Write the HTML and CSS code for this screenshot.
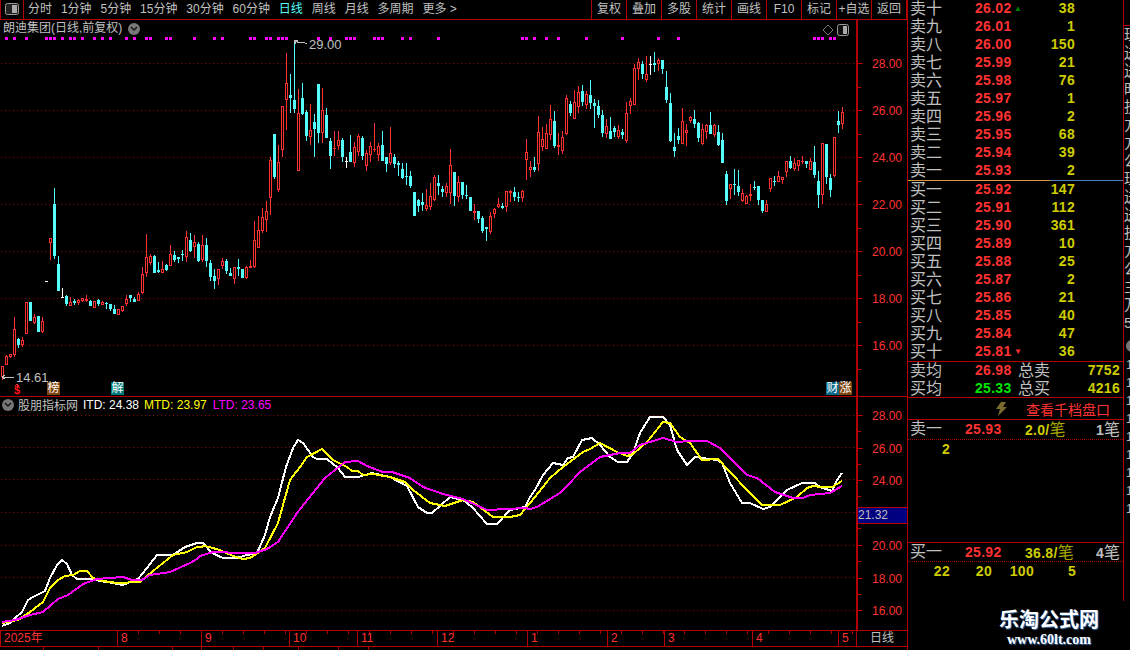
FILE: index.html
```html
<!DOCTYPE html>
<html lang="zh-CN">
<head>
    <meta charset="UTF-8">
    <title>朗迪集团 日线</title>
    <link rel="stylesheet" href="styles.css">
</head>
<body>
    <div class="app">
        <div class="main">
            <nav class="toolbar">
                <div class="tool-icon">
                    <svg width="14" height="12" viewBox="0 0 14 12"><rect x="0.5" y="0.5" width="13" height="11" rx="2" fill="#222" stroke="#999"/><rect x="7" y="2" width="5" height="8" fill="#aaa"/></svg>
                </div>
                <div class="periods">
                    <span>分时</span><span>1分钟</span><span>5分钟</span><span>15分钟</span><span>30分钟</span><span>60分钟</span>
                    <span class="current">日线</span><span>周线</span><span>月线</span><span>多周期</span><span>更多 &gt;</span>
                </div>
                <div class="tools">
                    <span>复权</span><span>叠加</span><span>多股</span><span>统计</span><span>画线</span><span>F10</span><span>标记</span><span>+自选</span><span>返回</span>
                </div>
            </nav>

            <section class="pane kline-pane">
                <div class="plot">
                    <svg id="klineChart" viewBox="0 20 856 376" width="856" height="376"></svg>
                    <div class="chart-title">
                        <span>朗迪集团(日线,前复权)</span>
                        <span class="drop-btn"><svg width="8" height="6" viewBox="0 0 8 6"><path d="M1 1l3 3 3-3" fill="none" stroke="#111" stroke-width="1.4"/></svg></span>
                    </div>
                    <div class="chart-tools">
                        <svg width="12" height="12" viewBox="0 0 12 12"><path d="M6 1l5 5-5 5-5-5z" fill="none" stroke="#777"/></svg>
                        <svg width="12" height="12" viewBox="0 0 12 12"><rect x="0.5" y="0.5" width="11" height="11" rx="2" fill="#111" stroke="#999"/><rect x="6" y="2" width="4" height="8" fill="#aaa"/></svg>
                    </div>
                    <span class="price-note note-high">29.00</span>
                    <span class="price-note note-low">14.61</span>
                    <span class="event-mark dollar">$</span>
                    <span class="event-mark badge badge-bang">榜</span>
                    <span class="event-mark badge badge-jie">解</span>
                    <span class="event-mark badge badge-cai">财</span>
                    <span class="event-mark badge badge-zhang">涨</span>
                </div>
                <div class="axis" id="klineAxis"></div>
            </section>

            <section class="pane indicator-pane">
                <div class="plot">
                    <svg id="indicatorChart" viewBox="0 397 856 233" width="856" height="233"></svg>
                    <div class="legend">
                        <span class="drop-btn"><svg width="8" height="6" viewBox="0 0 8 6"><path d="M1 1l3 3 3-3" fill="none" stroke="#111" stroke-width="1.4"/></svg></span>
                        <span class="legend-name">股朋指标网</span>
                        <span class="itd">ITD: 24.38</span>
                        <span class="mtd">MTD: 23.97</span>
                        <span class="ltd">LTD: 23.65</span>
                    </div>
                </div>
                <div class="axis" id="indicatorAxis">
                    <span class="cursor-price">21.32</span>
                </div>
            </section>

            <div class="time-row">
                <div class="time-axis" id="timeAxis"></div>
                <div class="time-unit">日线</div>
            </div>
            <div class="foot-row">
                <i></i><i></i><i></i><i></i><i></i><i></i><i></i><i></i><i></i>
            </div>
        </div>

        <aside class="quote">
            <div class="book">
                <div class="row"><span class="lbl">卖十</span><b class="up">26.02</b><em class="flag flag-up">▲</em><b class="vol">38</b></div>
                <div class="row"><span class="lbl">卖九</span><b class="up">26.01</b><em></em><b class="vol">1</b></div>
                <div class="row"><span class="lbl">卖八</span><b class="up">26.00</b><em></em><b class="vol">150</b></div>
                <div class="row"><span class="lbl">卖七</span><b class="up">25.99</b><em></em><b class="vol">21</b></div>
                <div class="row"><span class="lbl">卖六</span><b class="up">25.98</b><em></em><b class="vol">76</b></div>
                <div class="row"><span class="lbl">卖五</span><b class="up">25.97</b><em></em><b class="vol">1</b></div>
                <div class="row"><span class="lbl">卖四</span><b class="up">25.96</b><em></em><b class="vol">2</b></div>
                <div class="row"><span class="lbl">卖三</span><b class="up">25.95</b><em></em><b class="vol">68</b></div>
                <div class="row"><span class="lbl">卖二</span><b class="up">25.94</b><em></em><b class="vol">39</b></div>
                <div class="row"><span class="lbl">卖一</span><b class="up">25.93</b><em></em><b class="vol">2</b></div>
            </div>
            <div class="book-split"></div>
            <div class="book">
                <div class="row"><span class="lbl">买一</span><b class="up">25.92</b><em></em><b class="vol">147</b></div>
                <div class="row"><span class="lbl">买二</span><b class="up">25.91</b><em></em><b class="vol">112</b></div>
                <div class="row"><span class="lbl">买三</span><b class="up">25.90</b><em></em><b class="vol">361</b></div>
                <div class="row"><span class="lbl">买四</span><b class="up">25.89</b><em></em><b class="vol">10</b></div>
                <div class="row"><span class="lbl">买五</span><b class="up">25.88</b><em></em><b class="vol">25</b></div>
                <div class="row"><span class="lbl">买六</span><b class="up">25.87</b><em></em><b class="vol">2</b></div>
                <div class="row"><span class="lbl">买七</span><b class="up">25.86</b><em></em><b class="vol">21</b></div>
                <div class="row"><span class="lbl">买八</span><b class="up">25.85</b><em></em><b class="vol">40</b></div>
                <div class="row"><span class="lbl">买九</span><b class="up">25.84</b><em></em><b class="vol">47</b></div>
                <div class="row"><span class="lbl">买十</span><b class="up">25.81</b><em class="flag flag-down">▼</em><b class="vol">36</b></div>
            </div>

            <div class="totals">
                <div class="total-row"><span class="lbl">卖均</span><b class="up">26.98</b><span class="lbl">总卖</span><b class="vol">7752</b></div>
                <div class="total-row"><span class="lbl">买均</span><b class="down">25.33</b><span class="lbl">总买</span><b class="vol">4216</b></div>
            </div>

            <div class="depth-link">
                <svg width="12" height="14" viewBox="0 0 12 14"><path d="M6 0h5L8 5h4L3 14l2-7H1z" fill="#7a6a2e"/></svg>
                <span>查看千档盘口</span>
            </div>

            <div class="ticks">
                <div class="tick-head"><span class="lbl">卖一</span><b class="up">25.93</b><b class="avg">2.0/<span>笔</span></b><span class="count"><b>1</b>笔</span></div>
                <div class="tick-vols"><b>2</b></div>
            </div>
            <div class="ticks ticks-buy">
                <div class="tick-head"><span class="lbl">买一</span><b class="up">25.92</b><b class="avg">36.8/<span>笔</span></b><span class="count"><b>4</b>笔</span></div>
                <div class="tick-vols"><b>22</b><b>20</b><b>100</b><b>5</b></div>
            </div>

            <div class="watermark">
                <strong>乐淘公式网</strong>
                <strong class="site">www.60lt.com</strong>
            </div>
        </aside>

        <div class="news-edge">
            <div class="edge-rule"></div>
            <div class="edge-text">理<br>送<br>送<br>时<br>投<br>方<br>方<br>公<br>理<br>送<br>送<br>投<br>方<br>公<br>主<br>万<br>5</div>
            <div class="edge-drop"></div>
            <div class="edge-nums">1<br>1<br>1<br>1<br>1<br>1<br>1<br>1<br>1</div>
        </div>
    </div>

    <script src="chart.js"></script>
</body>
</html>
```

FILE: styles.css
```css
* {
    box-sizing: border-box;
}
html, body {
    margin: 0;
    padding: 0;
    background-color: #000;
}
body {
    font-family: "Liberation Sans", "Noto Sans CJK SC", sans-serif;
    font-size: 12px;
    color: #c0c0c0;
    overflow: hidden;
}
.app {
    display: grid;
    grid-template-columns: 907px 217px 6px;
    width: 1130px;
    height: 650px;
    overflow: hidden;
}

/* toolbar */
.toolbar {
    display: flex;
    height: 20px;
    border-bottom: 1px solid #b40000;
    line-height: 19px;
}
.tool-icon {
    width: 24px;
    border-left: 1px solid #b40000;
    border-right: 1px solid #b40000;
    padding: 3px 0 0 4px;
}
.tool-icon svg {
    display: block;
}
.periods {
    display: flex;
    gap: 8.9px;
    padding-left: 4px;
    flex: 1;
}
.periods .current {
    color: #54fcfc;
}
.tools {
    display: flex;
    border-right: 1px solid #b40000;
}
.tools span {
    width: 35px;
    text-align: center;
    border-left: 1px solid #b40000;
}

/* chart panes */
.pane {
    display: grid;
    grid-template-columns: 856px 51px;
    border-bottom: 1px solid #b40000;
}
.kline-pane {
    height: 377px;
}
.indicator-pane {
    height: 234px;
}
.plot {
    position: relative;
    overflow: hidden;
}
.plot svg {
    display: block;
}
.axis {
    position: relative;
    border-left: 2px solid #b40000;
}
.axis-label {
    position: absolute;
    right: 5px;
    color: #ff3232;
    line-height: 14px;
}
.axis-tick {
    position: absolute;
    left: 0;
    height: 1px;
    background-color: #b40000;
}
.chart-title {
    position: absolute;
    left: 3px;
    top: 0;
    display: flex;
    align-items: center;
    gap: 6px;
    font-size: 12px;
    line-height: 17px;
}
.drop-btn {
    display: inline-flex;
    align-items: center;
    justify-content: center;
    width: 12px;
    height: 12px;
    border-radius: 50%;
    background-color: #777;
}
.chart-tools {
    position: absolute;
    left: 822px;
    top: 4px;
    display: flex;
    gap: 3px;
}
.price-note {
    position: absolute;
    font-size: 13px;
    line-height: 12px;
}
.note-high {
    left: 309px;
    top: 19px;
}
.note-low {
    left: 16px;
    top: 352px;
}
.event-mark {
    position: absolute;
    top: 362px;
    height: 13px;
    line-height: 13px;
    font-size: 12px;
}
.dollar {
    left: 14px;
    top: 365px;
    height: 11px;
    line-height: 11px;
    font-size: 11px;
    color: #ff1010;
    font-weight: bold;
}
.badge {
    width: 13px;
    text-align: center;
    color: #fff;
}
.badge-bang, .badge-zhang {
    background-color: #80460f;
}
.badge-jie {
    background-color: #007a78;
}
.badge-cai {
    background-color: #0a6a8a;
}
.badge-bang {
    left: 47px;
}
.badge-jie {
    left: 111px;
}
.badge-cai {
    left: 826px;
}
.badge-zhang {
    left: 839px;
}
.legend {
    position: absolute;
    left: 2px;
    top: 0;
    display: flex;
    align-items: center;
    height: 15px;
    white-space: nowrap;
}
.legend-name {
    margin-left: 4px;
    font-size: 12px;
}
.itd {
    margin-left: 5px;
    color: #fff;
}
.mtd {
    margin-left: 5px;
    color: #ffff00;
}
.ltd {
    margin-left: 6px;
    color: #ff00ff;
}
.cursor-price {
    position: absolute;
    left: 0;
    right: 0;
    top: 110px;
    height: 17px;
    border-top: 1px solid #b40000;
    border-bottom: 1px solid #b40000;
    background-color: #000080;
    font-size: 12px;
    line-height: 15px;
}

/* time axis */
.time-row {
    display: grid;
    grid-template-columns: 856px 51px;
    height: 16px;
    border-bottom: 1px solid #b40000;
}
.time-axis {
    position: relative;
    color: #ff3232;
    line-height: 15px;
    overflow: hidden;
}
.time-label {
    position: absolute;
    top: 0;
    height: 15px;
    padding-left: 3px;
    border-left: 1px solid #b40000;
}
.time-mark {
    position: absolute;
    top: 0;
    width: 1px;
    height: 3px;
    background-color: #b40000;
}
.time-unit {
    border-left: 1px solid #b40000;
    text-align: center;
    line-height: 15px;
}
.foot-row {
    display: grid;
    grid-template-columns: 44px 55px 74px 29px 32px 30px 35px 40px 30px;
    height: 4px;
}
.foot-row i {
    border-right: 1px solid #b40000;
}

/* quote panel */
.quote {
    display: flex;
    flex-direction: column;
    height: 650px;
    border-left: 1px solid #b40000;
}
.lbl {
    font-size: 16px;
    color: #c0c0c0;
}
.up {
    color: #ff3232;
}
.down {
    color: #00e600;
}
.vol {
    color: #cccc00;
    text-align: right;
}
.quote b {
    font-size: 14px;
    letter-spacing: 0.3px;
}
.book {
    border-right: 1px solid #b40000;
}
.row {
    display: grid;
    grid-template-columns: 65px 38px 10px 52px;
    height: 18px;
    line-height: 17px;
    padding-left: 2px;
}
.row .lbl, .total-row .lbl, .tick-head .lbl {
    line-height: 17px;
}
.row em {
    font-style: normal;
}
.flag {
    font-size: 8px;
    text-align: center;
}
.flag-up {
    color: #008000;
}
.flag-down {
    color: #ff3232;
}
.book-split {
    height: 1px;
    border-right: 1px solid #b40000;
    background: linear-gradient(to right, #d89a3c 142px, #4a80c0 142px);
}
.totals {
    height: 37px;
    border-top: 1px solid #b40000;
    border-bottom: 1px solid #b40000;
    border-right: 1px solid #b40000;
    padding-left: 2px;
}
.total-row {
    display: grid;
    grid-template-columns: 65px 43px 1fr auto;
    height: 18px;
    line-height: 17px;
    padding-right: 3px;
}
.depth-link {
    display: flex;
    align-items: center;
    height: 22px;
    padding-left: 87px;
    gap: 19px;
    color: #ff3232;
    font-size: 14px;
    border-bottom: 1px solid #b40000;
    border-right: 1px solid #b40000;
}
.ticks {
    height: 122px;
    border-right: 1px solid #b40000;
}
.ticks-buy {
    height: 59px;
    border-top: 1px solid #b40000;
}
.tick-head {
    display: grid;
    grid-template-columns: 55px 60px 1fr auto;
    height: 20px;
    line-height: 19px;
    padding: 0 3px 0 2px;
    border-bottom: 1px dotted #a00000;
}
.ticks-buy .tick-head {
    height: 19px;
}
.avg {
    color: #cccc00;
}
.avg span {
    font-size: 16px;
    font-weight: normal;
    color: #a8a800;
}
.count {
    font-size: 16px;
}
.tick-vols {
    display: grid;
    grid-template-columns: repeat(4, 42px);
    height: 18px;
    line-height: 18px;
    color: #cccc00;
    text-align: right;
}
.watermark {
    flex: 1;
    display: flex;
    flex-direction: column;
    align-items: center;
    padding: 4px 0 0 66px;
    color: #fff;
    text-shadow: 1px 1px 1px #3a6ea5;
}
.watermark strong {
    font-size: 20px;
    line-height: 27px;
    font-family: "Noto Sans CJK SC", sans-serif;
}
.watermark .site {
    font-family: "Liberation Serif", serif;
    font-size: 14px;
    line-height: 16px;
}

/* clipped list at the window edge */
.news-edge {
    overflow: hidden;
}
.edge-rule {
    height: 1px;
    margin-top: 25px;
    background-color: #b40000;
}
.edge-text {
    width: 20px;
    font-size: 15px;
    line-height: 18px;
    color: #c0c0c0;
}
.edge-drop {
    width: 12px;
    height: 12px;
    margin: 8px 0 0 2px;
    border-radius: 50%;
    background-color: #777;
}
.edge-nums {
    margin: 4px 0 0 2px;
    line-height: 18px;
}
```

FILE: chart.js
```js
const SVG_NS = 'http://www.w3.org/2000/svg';
const RED = '#ff3232';
const CYAN = '#54fcfc';
const GRID = '#8c0000';

// Rows were read off 3x crops, so y = top + value / 3
// type wickTop bodyTop bodyBottom wickBottom
const CANDLES = [
    { start: 0, top: 200, rows: `r 497 497 532 540,r 466 468 494 494,r 462 463 470 473,r 351 388 465 470,c 414 417 436 443,
        r 411 420 436 441,r 306 307 401 401,c 306 306 363 363,r 342 352 368 372,c 348 348 395 395,r 352 364 396 399,
        w 243 243 244 244,r 115 115 128 180,c -36 12 167 177,c 168 192 273 273,w 265 290 293 293,c 286 288 313 317,
        r 292 307 317 317,c 296 303 308 315,r 296 301 309 316,r 294 295 303 307,r 286 297 303 306,c 300 303 317 317,
        r 303 304 323 323,c 298 301 312 317,r 303 306 315 316,c 305 310 312 327,c 312 312 327 333,c 316 327 342 342,
        r 327 328 344 344,r 318 319 334 335,r 286 296 311 318,c 285 286 294 305,c 291 296 305 305,r 276 283 303 304,
        r 202 222 280 281,r 102 172 218 231,r 162 169 189 195,c 166 168 218 219,c 186 210 215 218,r 183 208 218 218,
        c 192 195 210 213,r 135 163 197 197,c 153 165 180 186,c 171 171 177 189,c 151 161 163 183,r 94 111 170 185,
        c 99 120 153 156,r 105 127 140 174,c 127 131 183 186,r 106 135 179 186,c 114 135 183 201,c 180 190 231 243,
        c 208 228 243 267,r 207 208 236 255,r 174 183 198 207,c 178 183 214 221,c 205 219 227 228,r 201 202 236 252,
        c 177 201 206 228,c 207 207 234 234,r 199 202 234 236,r 180 198 204 205,r 64 121 201 204,r 49 91 143 145` },
    { start: 65, top: 40, rows: `r 505 531 573 580,r 484 514 540 575,r 352 360 473 525,c 283 283 412 416,r 316 367 449 456,
        r 198 198 331 352,r 40 129 179 270,c 102 165 174 218,c 3 180 207 218,r 148 220 392 392,c 129 174 222 225,
        c 210 215 288 303,r 192 270 290 315,c 222 246 267 351,c 132 132 279 309,r 144 210 279 309,c 204 225 294 294,
        c 294 303 348 387,r 273 324 328 348,r 273 300 318 330,c 294 300 351 366,w 351 363 365 384,c 285 336 366 366,
        r 306 321 369 381,r 282 288 336 348,c 288 294 348 360,r 330 339 378 393,r 306 318 345 366,r 249 327 331 336,
        r 309 318 345 363,c 273 315 363 363,c 351 351 372 396,r 261 339 369 375,c 342 351 372 384,c 363 369 375 408,
        c 369 387 414 417,c 369 408 411 435,c 393 408 438 444,c 456 456 528 528,c 477 480 498 516,c 459 486 495 513,
        r 447 495 507 513,r 429 468 501 510,r 405 411 480 483,c 405 429 438 465,c 438 447 456 471,r 429 438 459 471,
        r 327 375 459 492,c 396 396 468 498,r 408 426 471 486,c 426 426 465 477,c 435 465 468 477,c 471 471 513 513,
        r 492 513 519 540,c 513 513 537 549,c 528 534 573 579,c 561 561 567 603,r 516 528 576 582,r 504 507 522 534,
        r 474 492 501 504,c 489 498 504 507,r 453 453 501 516,r 450 453 459 486,c 441 456 471 483,c 456 471 474 486,
        r 450 453 474 486,r 297 336 360 420,r 363 381 390 411,c 351 381 390 396,r 228 276 372 393` },
    { start: 135, top: 40, rows: `r 262 297 321 333,r 252 279 327 327,r 195 237 285 300,c 213 243 318 324,r 279 315 321 345,
        r 273 291 333 342,r 165 174 282 285,c 183 192 219 228,r 150 186 237 237,r 138 156 201 219,c 135 153 186 198,
        r 153 162 195 207,c 120 165 189 207,c 177 189 198 264,c 180 198 225 234,c 210 225 279 291,r 237 258 282 294,
        c 231 273 297 297,c 258 264 276 291,r 255 270 291 297,c 267 276 285 297,r 186 219 303 309,r 174 183 198 222,
        r 72 84 195 195,r 54 66 87 120,c 63 72 102 117,r 48 102 120 126,w 48 72 74 105,c 36 69 75 96,r 54 60 72 93,
        c 60 60 87 102,c 93 141 180 189,c 159 189 303 306,c 279 321 333 351,c 264 288 300 312,r 204 243 312 312,
        r 252 270 278 318,r 228 231 243 249,c 210 237 252 264,c 246 249 294 306,r 252 267 312 315,r 252 255 276 297,
        c 216 255 282 282,r 252 255 285 291,c 255 276 315 318,c 279 300 369 369,c 393 402 483 495,r 432 432 447 477,
        c 387 432 435 465,c 390 438 456 468,r 447 459 483 486,r 465 468 492 492,r 432 462 468 483,c 423 441 444 450,
        c 438 438 480 495,c 480 480 513 519,r 480 492 516 516,r 414 414 447 456,c 408 423 426 438,r 393 408 426 426,
        r 411 411 420 432,r 363 363 396 411,c 348 363 384 387,r 354 369 387 393,r 360 360 378 393,r 348 363 364 372,
        c 363 363 372 384,r 354 363 390 390,c 318 366 405 414,c 393 423 465 504,r 309 309 465 492,c 312 312 411 432,
        c 402 414 450 471,r 291 291 408 411,c 213 243 255 279,r 201 216 252 267` }
];

// Candle indexes that carry a magenta marker along the top of the chart
const SIGNALS = [1, 3, 6, 11, 12, 13, 15, 17, 18, 20, 23, 25, 27, 31, 33, 36, 37, 41, 42, 48, 53, 55, 62, 63, 66, 67, 69, 70, 71,
    79, 82, 86, 87, 88, 93, 94, 95, 100, 102, 109, 130, 131, 133, 136, 139, 146, 155, 164, 169, 203, 204, 205, 207, 208];

// Indicator curves, each as [x, y] pieces from three crops: [left, top, points]
const LINES = [
    { color: '#ffffff', parts: [
        [0, 540, [[6,258],[30,250],[45,235],[65,215],[85,180],[100,170],[135,152],[150,115],[170,75],[187,60],[200,72],[215,105],[230,118],[280,118],[300,122],[340,130],[370,135],[390,125],[415,118],[440,85],[470,45],[520,45],[555,20],[590,8]]],
        [200, 400, [[10,428],[35,460],[70,475],[110,475],[140,465],[170,460],[195,405],[210,350],[235,295],[258,200],[280,145],[295,120],[310,128],[340,172],[350,177],[380,177],[415,205],[435,230],[475,230],[515,218],[570,230],[620,258],[655,320],[680,340],[695,340],[750,290],[790,300],[815,320],[860,372],[890,372],[930,330],[975,320]]],
        [530, 400, [[0,290],[15,270],[40,225],[70,190],[100,195],[115,175],[130,170],[155,120],[185,115],[210,135],[240,170],[265,185],[290,185],[310,160],[330,100],[360,50],[400,50],[420,75],[440,150],[470,195],[495,172],[560,180],[575,190],[600,250],[635,310],[660,310],[700,327],[720,320],[770,270],[815,250],[855,250],[870,262],[905,272],[920,240],[937,220]]]
    ] },
    { color: '#ffff00', parts: [
        [0, 540, [[6,250],[55,240],[90,215],[130,185],[150,145],[175,120],[195,107],[220,105],[240,92],[260,92],[280,115],[310,122],[350,128],[420,125],[460,92],[520,45],[560,35],[590,22]]],
        [200, 400, [[0,442],[15,437],[60,450],[100,468],[130,478],[150,475],[195,445],[235,370],[270,240],[300,200],[320,170],[365,148],[400,180],[440,200],[455,213],[475,213],[490,225],[520,222],[570,230],[615,245],[640,270],[690,308],[735,318],[790,300],[820,305],[880,350],[930,352],[960,345]]],
        [530, 400, [[0,310],[15,290],[60,235],[100,200],[160,155],[180,148],[210,130],[260,155],[290,168],[310,162],[350,125],[375,95],[400,65],[420,68],[450,110],[480,130],[515,180],[565,178],[600,215],[650,270],[695,315],[750,315],[800,290],[830,265],[850,258],[875,260],[905,262],[937,242]]]
    ] },
    { color: '#ff00ff', parts: [
        [0, 540, [[6,247],[45,240],[90,225],[130,215],[175,178],[205,165],[250,132],[290,118],[370,110],[395,120],[425,120],[450,105],[510,95],[570,70],[590,58]]],
        [200, 400, [[0,467],[40,457],[130,458],[165,458],[200,447],[235,425],[290,340],[375,235],[435,187],[475,182],[500,197],[550,215],[575,215],[630,235],[670,260],[730,282],[790,297],[860,330],[920,328],[975,325]]],
        [530, 400, [[0,327],[20,322],[90,280],[110,258],[150,215],[210,172],[270,158],[300,158],[330,135],[400,113],[440,127],[480,122],[530,122],[570,145],[650,225],[680,235],[735,275],[790,293],[820,293],[840,285],[900,278],[937,258]]]
    ] }
];

const MONTHS = [['8', 117], ['9', 201], ['10', 289], ['11', 357], ['12', 437], ['1', 527], ['2', 607], ['3', 664], ['4', 752], ['5', 838]];

function addRect(svg, x, y, w, h, fill) {
    const rect = document.createElementNS(SVG_NS, 'rect');
    rect.setAttribute('x', x);
    rect.setAttribute('y', y);
    rect.setAttribute('width', w);
    rect.setAttribute('height', h);
    rect.setAttribute('fill', fill);
    svg.appendChild(rect);
}

function addPolyline(svg, points, color, width) {
    const line = document.createElementNS(SVG_NS, 'polyline');
    line.setAttribute('points', points);
    line.setAttribute('fill', 'none');
    line.setAttribute('stroke', color);
    line.setAttribute('stroke-width', width);
    line.setAttribute('shape-rendering', 'crispEdges');
    svg.appendChild(line);
}

// Dotted guide lines
function drawGrid(svg, rows) {
    rows.forEach(y => {
        for (let x = 1; x < 856; x += 4) {
            addRect(svg, x, y, 1, 1, GRID);
        }
    });
}

function drawCandles(svg) {
    CANDLES.forEach(group => {
        group.rows.split(',').forEach((row, n) => {
            const parts = row.trim().split(' ');
            const [wickTop, bodyTop, bodyBottom, wickBottom] = parts.slice(1).map(v => Math.round(group.top + v / 3));
            const x = 2 + 4 * (group.start + n);
            const color = parts[0] === 'r' ? RED : parts[0] === 'c' ? CYAN : '#ffffff';
            addRect(svg, x, wickTop, 1, Math.max(wickBottom - wickTop, 1), color);
            addRect(svg, x - 1, bodyTop, 3, Math.max(bodyBottom - bodyTop, 1), color);
            // Rising candles are hollow
            if (parts[0] === 'r' && bodyBottom - bodyTop > 2) {
                addRect(svg, x, bodyTop + 1, 1, bodyBottom - bodyTop - 2, '#000000');
            }
        });
    });
}

function drawNotes(svg) {
    SIGNALS.forEach(i => addRect(svg, 1 + 4 * i, 37, 3, 3, '#ff00ff'));
    // High and low price pointers
    addPolyline(svg, '296,44 294,41 298,40', '#c0c0c0', 1);
    addPolyline(svg, '295,41 300,43 303,42 307,44', '#c0c0c0', 1);
    addPolyline(svg, '2,377 14,377', '#c0c0c0', 1);
    addPolyline(svg, '5,375 2,377 5,379', '#c0c0c0', 1);
    // Arrow above the dollar mark
    addPolyline(svg, '17,388 17,385', RED, 1);
    addPolyline(svg, '15,386 17,384 19,386', RED, 1);
}

function drawIndicator(svg) {
    LINES.forEach(line => {
        const points = [];
        line.parts.forEach(([left, top, list]) => {
            list.forEach(([x, y]) => points.push(Math.round(left + x / 3) + ',' + Math.round(top + y / 3)));
        });
        addPolyline(svg, points.join(' '), line.color, 2);
    });
}

function fillAxis(axis, paneTop, labels, minorRows) {
    labels.forEach(([text, y]) => {
        const label = document.createElement('span');
        label.className = 'axis-label';
        label.textContent = text;
        label.style.top = (y - paneTop - 6) + 'px';
        axis.appendChild(label);
        addTick(axis, y - paneTop, 5);
    });
    minorRows.forEach(y => addTick(axis, y - paneTop, 3));
}

function addTick(axis, top, width) {
    const tick = document.createElement('span');
    tick.className = 'axis-tick';
    tick.style.top = top + 'px';
    tick.style.width = width + 'px';
    axis.appendChild(tick);
}

function fillTimeAxis(axis) {
    const first = document.createElement('span');
    first.className = 'time-label';
    first.style.left = '0px';
    first.textContent = '2025年';
    axis.appendChild(first);
    for (let x = 138; x < 856; x += 21) {
        const mark = document.createElement('span');
        mark.className = 'time-mark';
        mark.style.left = x + 'px';
        axis.appendChild(mark);
    }
    MONTHS.forEach(([text, x]) => {
        const label = document.createElement('span');
        label.className = 'time-label';
        label.style.left = x + 'px';
        label.textContent = text;
        axis.appendChild(label);
    });
}

const klineChart = document.getElementById('klineChart');
drawGrid(klineChart, [63, 110, 157, 204, 251, 298, 345]);
drawCandles(klineChart);
drawNotes(klineChart);

const indicatorChart = document.getElementById('indicatorChart');
drawGrid(indicatorChart, [415, 447, 479, 512, 545, 577, 610]);
drawIndicator(indicatorChart);

fillAxis(document.getElementById('klineAxis'), 20,
    [['28.00', 63], ['26.00', 110], ['24.00', 157], ['22.00', 204], ['20.00', 251], ['18.00', 298], ['16.00', 345]],
    [87, 134, 181, 228, 275, 322, 369]);
fillAxis(document.getElementById('indicatorAxis'), 397,
    [['28.00', 415], ['26.00', 448], ['24.00', 480], ['20.00', 545], ['18.00', 578], ['16.00', 610]],
    [431, 464, 496, 528, 561, 594]);
fillTimeAxis(document.getElementById('timeAxis'));
```
